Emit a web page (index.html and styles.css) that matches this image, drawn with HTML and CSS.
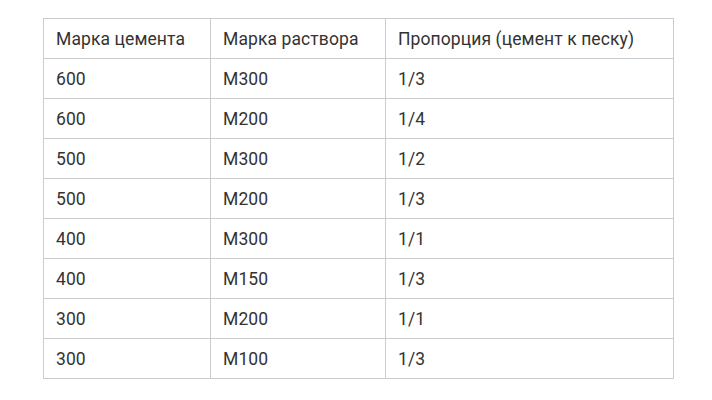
FILE: index.html
```html
<!DOCTYPE html>
<html lang="ru">
<head>
<meta charset="utf-8">
<link rel="stylesheet" href="styles.css">
</head>
<body>
<table class="grid">
  <colgroup>
    <col class="c1"><col class="c2"><col class="c3">
  </colgroup>
  <tr><td>Марка цемента</td><td>Марка раствора</td><td>Пропорция (цемент к песку)</td></tr>
  <tr><td>600</td><td>М300</td><td>1/3</td></tr>
  <tr><td>600</td><td>М200</td><td>1/4</td></tr>
  <tr><td>500</td><td>М300</td><td>1/2</td></tr>
  <tr><td>500</td><td>М200</td><td>1/3</td></tr>
  <tr><td>400</td><td>М300</td><td>1/1</td></tr>
  <tr><td>400</td><td>М150</td><td>1/3</td></tr>
  <tr><td>300</td><td>М200</td><td>1/1</td></tr>
  <tr><td>300</td><td>М100</td><td>1/3</td></tr>
</table>
</body>
</html>
```
FILE: styles.css
```css
html, body {
  margin: 0;
  background: #fff;
}
body {
  padding: 18px 0 0 43px;
  font-family: Roboto, "Noto Sans", sans-serif;
  font-size: 17.5px;
  letter-spacing: 0.1px;
  color: #333;
}
.grid {
  border-collapse: collapse;
  width: 630px;
  table-layout: fixed;
}
.c1 { width: 167px; }
.c2 { width: 175px; }
.c3 { width: 288px; }
.grid td {
  border: 1px solid #ccc;
  height: 40px;
  padding: 0 0 0 12px;
  box-sizing: border-box;
  vertical-align: middle;
  line-height: 20px;
}
```
